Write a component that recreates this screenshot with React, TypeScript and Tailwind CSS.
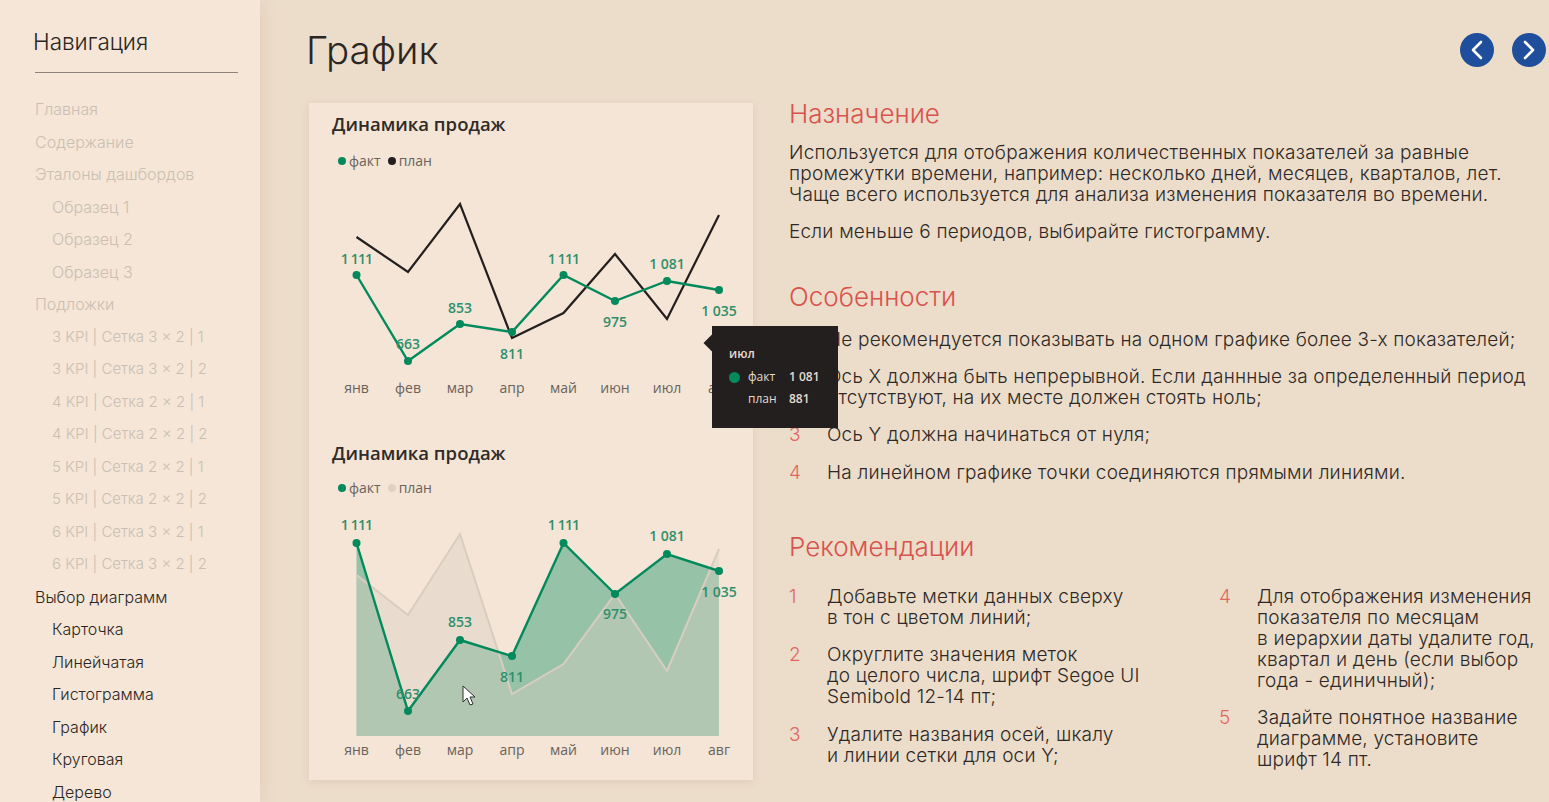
const navItems: [string, boolean, boolean][] = [
  ["Главная", false, false],
  ["Содержание", false, false],
  ["Эталоны дашбордов", false, false],
  ["Образец 1", true, false],
  ["Образец 2", true, false],
  ["Образец 3", true, false],
  ["Подложки", false, false],
  ["3 KPI | Сетка 3 × 2 | 1", true, false],
  ["3 KPI | Сетка 3 × 2 | 2", true, false],
  ["4 KPI | Сетка 2 × 2 | 1", true, false],
  ["4 KPI | Сетка 2 × 2 | 2", true, false],
  ["5 KPI | Сетка 2 × 2 | 1", true, false],
  ["5 KPI | Сетка 2 × 2 | 2", true, false],
  ["6 KPI | Сетка 3 × 2 | 1", true, false],
  ["6 KPI | Сетка 3 × 2 | 2", true, false],
  ["Выбор диаграмм", false, true],
  ["Карточка", true, true],
  ["Линейчатая", true, true],
  ["Гистограмма", true, true],
  ["График", true, true],
  ["Круговая", true, true],
  ["Дерево", true, true],
];

const months = ["янв", "фев", "мар", "апр", "май", "июн", "июл", "авг"];
const xs = [47.5, 99, 151, 203, 254.5, 306, 358, 410];
const green = "#038a5c";

type Label = [string, number];

function pts(ys: number[]) {
  return ys.map((y, i) => `${xs[i]},${y}`).join(" ");
}

function Legend({ planColor }: { planColor: string }) {
  return (
    <div className="flex items-center text-[14px] leading-none text-[#6a625b] pl-[29px]">
      <span className="w-2 h-2 rounded-full bg-[#038a5c] mr-[3px]" />
      <span className="mr-[7px]">факт</span>
      <span className="w-2 h-2 rounded-full mr-[3px]" style={{ backgroundColor: planColor }} />
      <span>план</span>
    </div>
  );
}

function DataLabels({ labels }: { labels: Label[] }) {
  return (
    <>
      {labels.map(([t, y], i) => (
        <text
          key={i}
          x={xs[i]}
          y={y}
          textAnchor="middle"
          fontSize="14"
          fontWeight="600"
          fill="#2f8f6c"
          letterSpacing={t === "1 111" ? -0.8 : 0}
        >
          {t}
        </text>
      ))}
    </>
  );
}

function LineChart() {
  const fact = [121, 207, 170, 178, 121, 147, 127, 136];
  const plan = [83, 118, 50, 184, 159, 100, 165, 61];
  const labels: Label[] = [
    ["1 111", 110],
    ["663", 195],
    ["853", 159],
    ["811", 205],
    ["1 111", 110],
    ["975", 173],
    ["1 081", 115],
    ["1 035", 162],
  ];
  return (
    <svg width="444" height="250" className="block -mt-[14px]">
      <polyline points={pts(plan)} fill="none" stroke="#231f1e" strokeWidth="2.2" />
      <polyline points={pts(fact)} fill="none" stroke={green} strokeWidth="2.4" />
      {fact.map((y, i) => (
        <circle key={i} cx={xs[i]} cy={y} r="4" fill={green} />
      ))}
      <DataLabels labels={labels} />
      {months.map((m, i) => (
        <text key={m} x={xs[i]} y={239} textAnchor="middle" fontSize="14" fill="#6a625b">
          {m}
        </text>
      ))}
    </svg>
  );
}

function AreaChart() {
  const fact = [77, 245, 174, 190, 77, 128, 88, 105];
  const plan = [109, 149, 68, 228, 198, 128, 205, 83];
  const base = 270;
  const labels: Label[] = [
    ["1 111", 64],
    ["663", 233],
    ["853", 161],
    ["811", 216],
    ["1 111", 64],
    ["975", 153],
    ["1 081", 75],
    ["1 035", 131],
  ];
  return (
    <svg width="444" height="294" className="block -mt-[29px]">
      <polygon points={`${xs[0]},${base} ${pts(fact)} ${xs[7]},${base}`} fill={green} fillOpacity="0.39" />
      <polygon points={`${xs[0]},${base} ${pts(plan)} ${xs[7]},${base}`} fill="#d9cfc2" fillOpacity="0.4" />
      <polyline points={pts(plan)} fill="none" stroke="#d8cdc0" strokeWidth="2" />
      <polyline points={pts(fact)} fill="none" stroke={green} strokeWidth="2.4" />
      {fact.map((y, i) => (
        <circle key={i} cx={xs[i]} cy={y} r="4" fill={green} />
      ))}
      <DataLabels labels={labels} />
      {months.map((m, i) => (
        <text key={m} x={xs[i]} y={289} textAnchor="middle" fontSize="14" fill="#6a625b">
          {m}
        </text>
      ))}
    </svg>
  );
}

function Tooltip() {
  return (
    <div className="absolute left-[403px] top-[223px] w-[126px] h-[102px] bg-[#231f1e] text-[#e4dcd2] text-[12px] font-semibold pl-[17px] pt-[20px] z-10">
      <div className="absolute -left-[6px] top-[11px] w-3 h-3 rotate-45 bg-[#231f1e]" />
      <div className="leading-4 mb-[4px]">июл</div>
      <div className="flex items-center h-[22px]">
        <span className="w-[11px] h-[11px] rounded-full bg-[#038a5c] mr-[8px]" />
        <span className="w-[41px] font-normal">факт</span>
        <span>1 081</span>
      </div>
      <div className="flex items-center h-[22px] pl-[19px]">
        <span className="w-[41px] font-normal">план</span>
        <span>881</span>
      </div>
    </div>
  );
}

function Numbered({ n, children }: { n: number; children: React.ReactNode }) {
  return (
    <div className="flex">
      <span className="w-[38px] shrink-0 text-[#e0685f]">{n}</span>
      <span>{children}</span>
    </div>
  );
}

export default function App() {
  return (
    <div
      className="flex h-screen w-screen overflow-hidden bg-[#ecdcca] text-[#2e2926]"
      style={{ fontFamily: '"Inter", "Noto Sans", sans-serif' }}
    >
      {/* Sidebar */}
      <aside className="w-[260px] shrink-0 bg-[#f5e6d8] shadow-[4px_0_14px_rgba(170,140,110,0.12)] pl-[35px] pr-[22px] pt-[28px]">
        <h2 className="-ml-[2px] text-[22.5px] leading-[27px] font-light text-[#2b2623]">Навигация</h2>
        <div className="h-px bg-[#8d837a] mt-[17px] mb-[20px]" />
        <nav className="flex flex-col">
          {navItems.map(([label, nested, active]) => (
            <div
              key={label}
              className={`h-[32.5px] leading-[32.5px] font-light whitespace-nowrap ${label.includes("KPI") ? "text-[15px]" : "text-[16px]"} ${nested ? "pl-[17px]" : ""} ${active ? "text-[#2b2623]" : "text-[#c9bfb2]"}`}
            >
              {label}
            </div>
          ))}
        </nav>
      </aside>

      {/* Main */}
      <main className="flex-1 min-w-0 pl-[46px] pt-[24px]">
        <header className="flex items-center justify-between h-[52px] pr-[3px]">
          <h1 className="text-[38.5px] leading-[52px] font-light text-[#2b2623]">График</h1>
          <div className="flex items-center gap-[18px]">
            <button className="w-[34px] h-[34px] rounded-full bg-[#1f4f9c] flex items-center justify-center">
              <svg width="16" height="22" viewBox="0 0 16 22" fill="none" stroke="#fff" strokeWidth="2.6" strokeLinecap="round" strokeLinejoin="round">
                <path d="M12 3 4 11l8 8" />
              </svg>
            </button>
            <button className="w-[34px] h-[34px] rounded-full bg-[#1f4f9c] flex items-center justify-center">
              <svg width="16" height="22" viewBox="0 0 16 22" fill="none" stroke="#fff" strokeWidth="2.6" strokeLinecap="round" strokeLinejoin="round">
                <path d="M4 3l8 8-8 8" />
              </svg>
            </button>
          </div>
        </header>

        <div className="flex mt-[27px] pl-[3px]">
          {/* Charts card */}
          <section
            className="relative w-[444px] h-[677px] shrink-0 bg-[#f4e5d6] shadow-[0_2px_8px_rgba(170,140,110,0.18)]"
            style={{ fontFamily: '"Open Sans", sans-serif' }}
          >
            <h3 className="pl-[23px] pt-[8px] text-[18.5px] leading-[26px] font-semibold text-[#2f2b28]">Динамика продаж</h3>
            <div className="mt-[17px]">
              <Legend planColor="#231f1e" />
            </div>
            <LineChart />
            <h3 className="pl-[23px] mt-[36px] text-[18.5px] leading-[26px] font-semibold text-[#2f2b28]">Динамика продаж</h3>
            <div className="mt-[15px]">
              <Legend planColor="#ddd2c5" />
            </div>
            <AreaChart />
            <Tooltip />
            {/* mouse pointer */}
            <svg className="absolute left-[153px] top-[582px]" width="14" height="22" viewBox="0 0 14 22">
              <path d="M1 1v16l4-4 3 7 3-1-3-7h5z" fill="#fff" stroke="#33302e" strokeWidth="1" strokeLinejoin="round" />
            </svg>
          </section>

          {/* Text */}
          <div className="ml-[36px] min-w-0 flex-1 text-[19px] tracking-[0.2px] leading-[21px] font-light text-[#2e2926] whitespace-nowrap">
            <h2 className="text-[26px] leading-[30px] font-light text-[#d9534c] -mt-[4px] tracking-normal">Назначение</h2>
            <p className="mt-[13px]">
              Используется для отображения количественных показателей за равные
              <br />
              промежутки времени, например: несколько дней, месяцев, кварталов, лет.
              <br />
              Чаще всего используется для анализа изменения показателя во времени.
            </p>
            <p className="mt-[16px]">Если меньше 6 периодов, выбирайте гистограмму.</p>

            <h2 className="mt-[40px] text-[26px] leading-[30px] font-light text-[#d9534c] tracking-normal">Особенности</h2>
            <div className="mt-[17px] flex flex-col gap-[16.2px]">
              <Numbered n={1}>Не рекомендуется показывать на одном графике более 3-х показателей;</Numbered>
              <Numbered n={2}>
                Ось X должна быть непрерывной. Если даннные за определенный период
                <br />
                отсутствуют, на их месте должен стоять ноль;
              </Numbered>
              <Numbered n={3}>Ось Y должна начинаться от нуля;</Numbered>
              <Numbered n={4}>На линейном графике точки соединяются прямыми линиями.</Numbered>
            </div>

            <h2 className="mt-[49px] text-[26px] leading-[30px] font-light text-[#d9534c] tracking-normal">Рекомендации</h2>
            <div className="mt-[24px] flex">
              <div className="w-[430px] shrink-0 flex flex-col gap-[16.5px]">
                <Numbered n={1}>
                  Добавьте метки данных сверху
                  <br />в тон с цветом линий;
                </Numbered>
                <Numbered n={2}>
                  Округлите значения меток
                  <br />
                  до целого числа, шрифт Segoe UI
                  <br />
                  Semibold 12-14 пт;
                </Numbered>
                <Numbered n={3}>
                  Удалите названия осей, шкалу
                  <br />и линии сетки для оси Y;
                </Numbered>
              </div>
              <div className="flex flex-col gap-[16.5px]">
                <Numbered n={4}>
                  Для отображения изменения
                  <br />
                  показателя по месяцам
                  <br />в иерархии даты удалите год,
                  <br />
                  квартал и день (если выбор
                  <br />
                  года - единичный);
                </Numbered>
                <Numbered n={5}>
                  Задайте понятное название
                  <br />
                  диаграмме, установите
                  <br />
                  шрифт 14 пт.
                </Numbered>
              </div>
            </div>
          </div>
        </div>
      </main>
    </div>
  );
}
